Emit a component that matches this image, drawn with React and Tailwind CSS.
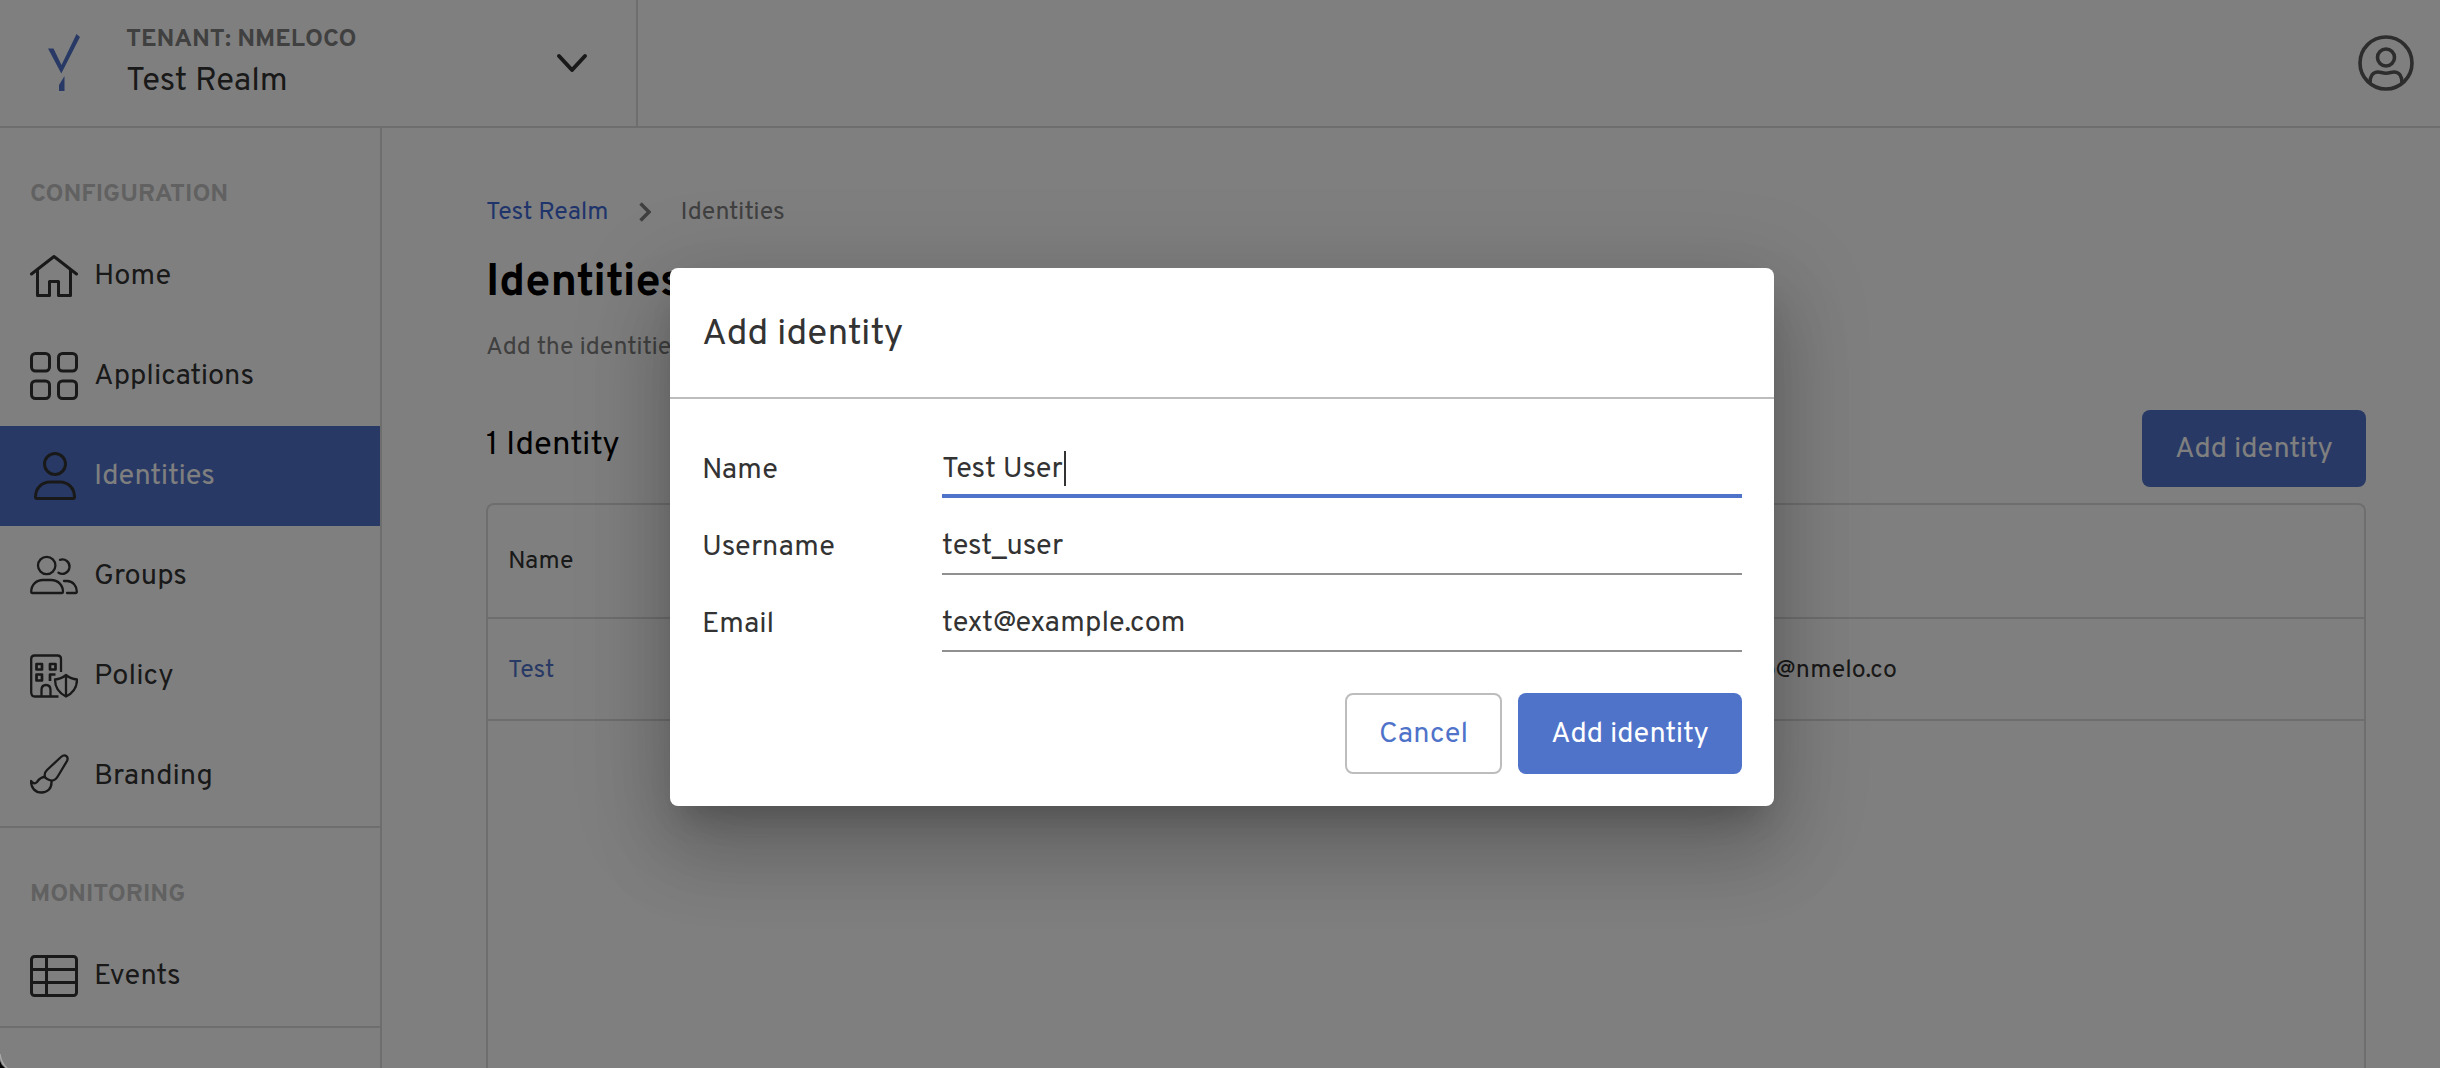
import { useEffect, useRef } from "react";

function Logo() {
  return (
    <svg viewBox="0 0 34 58" className="h-[58px] w-[34px] shrink-0" fill="#5073ca" aria-hidden="true">
      <path d="M0 14.500H5.500L13.500 31L28.500 0L32 3L13.300 39.500Z" />
      <path d="M16.500 42V57H11V51Z" />
    </svg>
  );
}

const icon = "h-12 w-12 shrink-0";

function HomeIcon() {
  return (
    <svg viewBox="0 0 48 48" className={icon} fill="none" stroke="#333" strokeWidth="3" strokeLinecap="round" strokeLinejoin="round" aria-hidden="true">
      <path d="M1.500 22L24 4.500L46.500 22M7.500 18V43.500H19.500V29.500H28.500V43.500H40.500V18" />
    </svg>
  );
}

function AppsIcon() {
  return (
    <svg viewBox="0 0 48 48" className={icon} fill="none" stroke="#333" strokeWidth="3" aria-hidden="true">
      <rect x="1.500" y="1.500" width="18" height="17.500" rx="4" />
      <rect x="28.500" y="1.500" width="18" height="17.500" rx="4" />
      <rect x="1.500" y="29" width="18" height="17.500" rx="4" />
      <rect x="28.500" y="29" width="18" height="17.500" rx="4" />
    </svg>
  );
}

function PersonIcon() {
  return (
    <svg viewBox="0 0 48 48" className={icon} fill="none" stroke="#333" strokeWidth="3" strokeLinejoin="round" aria-hidden="true">
      <circle cx="25" cy="12" r="10.500" />
      <path d="M5.500 45C5.500 36 12 30 20 30H30C38 30 44.500 36 44.500 45Q44.500 46.500 43 46.500H7Q5.500 46.500 5.500 45Z" />
    </svg>
  );
}

function GroupIcon() {
  return (
    <svg viewBox="0 0 48 48" className={icon} fill="none" stroke="#333" strokeWidth="2.300" strokeLinecap="round" strokeLinejoin="round" aria-hidden="true">
      <circle cx="16.700" cy="13.500" r="8.700" />
      <path d="M1.200 40C1.200 33 6 28 13 28H21C28 28 33 33 33 40Q33 41 32 41H2Q1.200 41 1.200 40Z" />
      <path d="M30 7.800A7.200 7.200 0 1 1 28.500 20.700M34 29H37C43 29 46.800 34 46.800 39.500Q46.800 41 45.500 41H37" />
    </svg>
  );
}

function PolicyIcon() {
  return (
    <svg viewBox="0 0 48 48" className={icon} fill="none" stroke="#333" strokeWidth="2.300" strokeLinejoin="round" aria-hidden="true">
      <path d="M31 20V7Q31 3.500 27.500 3.500H4.700Q1.200 3.500 1.200 7V40Q1.200 44.500 4.700 44.500H28.500" />
      <path d="M11.500 44V38Q11.500 33 16 33T20.500 38V44" />
      <g strokeWidth="2.700">
        <rect x="6.500" y="12" width="5.500" height="5.500" />
        <rect x="20" y="12" width="5.500" height="5.500" />
        <rect x="6.500" y="22.500" width="5.500" height="6" />
        <path d="M25.500 22.500H20V29" />
      </g>
      <path d="M36 23Q41 27 47 27.500Q47 39 36 44.500Q25 39 25 27.500Q31 27 36 23ZM36 23V44.500" />
    </svg>
  );
}

function BrushIcon() {
  return (
    <svg viewBox="0 0 48 48" className={icon} fill="none" stroke="#333" strokeWidth="2.300" strokeLinecap="round" strokeLinejoin="round" aria-hidden="true">
      <path d="M15 25C14 22 15 20 17 18L31 5C35 1.500 39 4.500 37 9L28 24C26 27.500 24 29 21 28.500Q16 27 15 25Z" />
      <path d="M21.500 29C22 37 17 40.500 11.500 40.500C5 40.500 1 36 1 29Q4 33 7 30C9 27 11 25 15 25" />
    </svg>
  );
}

function EventsIcon() {
  return (
    <svg viewBox="0 0 48 48" className={icon} fill="none" stroke="#333" strokeWidth="3" aria-hidden="true">
      <rect x="1.500" y="4.500" width="45" height="39" rx="3" />
      <path d="M1.500 17.500H46.500M1.500 30.500H46.500M16.500 4.500V43.500" />
    </svg>
  );
}

const sections = [
  {
    title: "CONFIGURATION",
    items: [
      { label: "Home", Icon: HomeIcon },
      { label: "Applications", Icon: AppsIcon },
      { label: "Identities", Icon: PersonIcon, active: true },
      { label: "Groups", Icon: GroupIcon },
      { label: "Policy", Icon: PolicyIcon },
      { label: "Branding", Icon: BrushIcon },
    ],
  },
  { title: "MONITORING", items: [{ label: "Events", Icon: EventsIcon }] },
];

function Header() {
  return (
    <header className="flex h-32 shrink-0 items-stretch border-b-2 border-[#dcdcdc]">
      <button type="button" className="flex w-[638px] items-center gap-11 border-r-2 border-[#dcdcdc] pr-12 pl-12 text-left">
        <Logo />
        <span className="flex flex-1 flex-col gap-1 pt-0.5">
          <span className="text-[25px] leading-8 font-bold text-[#808080]">TENANT: NMELOCO</span>
          <span className="text-[33px] leading-[44px] text-[#333]">Test Realm</span>
        </span>
        <svg viewBox="0 0 32 20" className="h-5 w-8" fill="none" stroke="#333" strokeWidth="4" strokeLinecap="round" strokeLinejoin="round" aria-hidden="true">
          <path d="M3 3L16 17L29 3" />
        </svg>
      </button>
      <button type="button" aria-label="Account" className="mr-[26px] ml-auto">
        <svg viewBox="0 0 56 56" className="h-14 w-14" fill="none" stroke="#5a5a5a" strokeWidth="3.600" aria-hidden="true">
          <circle cx="28" cy="28" r="26" />
          <circle cx="28" cy="22.500" r="8.500" />
          <path d="M12 48C12 41 15 37 20 37C23 37 24 38.200 28 38.200S33 37 36 37C41 37 44 41 44 48" />
        </svg>
      </button>
    </header>
  );
}

function Sidebar() {
  return (
    <nav className="w-[382px] shrink-0 border-r-2 border-[#dcdcdc]">
      {sections.map((section) => (
        <section key={section.title} className="border-b-2 border-[#dcdcdc]">
          <h2 className="flex h-[98px] items-center px-[30px] pt-9 text-[25px] leading-8 font-bold text-[#c2c2c2]">{section.title}</h2>
          {section.items.map(({ label, Icon, active }) => (
            <a
              key={label}
              href="#"
              aria-current={active ? "page" : undefined}
              className={active ? "flex h-[100px] items-center gap-4 bg-[#5073ca] px-[30px] text-[29px] text-white" : "flex h-[100px] items-center gap-4 px-[30px] text-[29px] text-[#333]"}
            >
              <Icon />
              <span className="pt-0.5">{label}</span>
            </a>
          ))}
        </section>
      ))}
    </nav>
  );
}

function Content() {
  return (
    <main className="flex min-w-0 flex-1 flex-col pt-16 pr-[74px] pl-[104px]">
      <nav aria-label="Breadcrumb" className="flex h-10 items-center gap-[30px] text-[25px] text-[#808080]">
        <a href="#" className="pt-1 text-[#4169d8]">Test Realm</a>
        <svg viewBox="0 0 12 20" className="h-5 w-3" fill="none" stroke="#808080" strokeWidth="3.500" aria-hidden="true">
          <path d="M1.500 1.500L10 10L1.500 18.500" />
        </svg>
        <span className="pt-1">Identities</span>
      </nav>
      <h1 className="mt-5 pt-1 text-[45px] leading-[56px] font-bold text-black">Identities</h1>
      <p className="mt-4 text-[25px] leading-10 text-[#808080]">Add the identities</p>
      <div className="mt-[42px] flex h-[77px] items-center justify-between">
        <h2 className="pb-1 text-[33px] text-black">1 Identity</h2>
        <button type="button" className="h-full w-56 rounded-lg bg-[#5073ca] pt-0.5 text-[29px] text-white">Add identity</button>
      </div>
      <div className="mt-4 flex-1 rounded-t-lg border-2 border-b-0 border-[#dcdcdc]">
        <table className="w-full table-fixed text-left text-[25px] text-[#333]">
          <thead>
            <tr className="h-[113px] border-b-2 border-[#dcdcdc]">
              <th scope="col" className="w-[64%] px-5 pt-1 font-normal">Name</th>
              <th scope="col" className="px-2 pt-1 font-normal">Email</th>
            </tr>
          </thead>
          <tbody>
            <tr className="h-[102px] border-b-2 border-[#dcdcdc]">
              <td className="px-5 pt-1.5"><a href="#" className="text-[#5073ca]">Test</a></td>
              <td className="px-8 pt-1.5">hello@nmelo.co</td>
            </tr>
          </tbody>
        </table>
      </div>
    </main>
  );
}

const fields = [
  { id: "name", label: "Name", value: "Test User" },
  { id: "username", label: "Username", value: "test_user" },
  { id: "email", label: "Email", value: "text@example.com" },
];

function Dialog() {
  const first = useRef(null);
  useEffect(() => {
    const input = first.current;
    input.focus();
    input.setSelectionRange(input.value.length, input.value.length);
  }, []);

  return (
    <div className="absolute inset-0 flex items-start justify-center bg-black/50 pt-[268px] pl-1">
      <div
        role="dialog"
        aria-modal="true"
        aria-labelledby="dialog-title"
        className="w-[1104px] rounded-lg bg-white text-[#333] shadow-[0_22px_30px_-14px_rgba(0,0,0,0.2),0_48px_76px_6px_rgba(0,0,0,0.14),0_18px_92px_16px_rgba(0,0,0,0.12)]"
      >
        <h2 id="dialog-title" className="flex h-[131px] items-center border-b-2 border-[#bdbdbd] px-8 pt-1 text-[37px]">Add identity</h2>
        <form className="px-8 pt-9 pb-8">
          {fields.map((field, index) => (
            <div key={field.id} className="flex h-[77px] items-start text-[29px]">
              <label htmlFor={field.id} className="w-60 leading-[71px]">{field.label}</label>
              <div className="relative flex min-w-0 flex-1">
                <input
                  id={field.id}
                  ref={index === 0 ? first : undefined}
                  defaultValue={field.value}
                  className="h-[63px] w-full border-b-2 border-[#909090] pt-2 caret-transparent outline-none focus:border-b-4 focus:border-[#5073ca] focus:pt-2.5"
                />
                {index === 0 && <span aria-hidden="true" className="absolute top-4 left-[122px] h-[35px] w-0.5 bg-[#333]" />}
              </div>
            </div>
          ))}
          <div className="mt-[27px] flex justify-end gap-4 text-[29px]">
            <button type="button" className="h-[81px] w-[157px] rounded-lg border-2 border-[#bdbdbd] pt-0.5 text-[#5073ca]">Cancel</button>
            <button type="submit" className="h-[81px] w-56 rounded-lg bg-[#5073ca] pt-0.5 text-white">Add identity</button>
          </div>
        </form>
      </div>
    </div>
  );
}

function WindowCorner() {
  return (
    <svg viewBox="0 0 10 16" className="absolute bottom-0 left-0 h-4 w-2.5" fill="none" aria-hidden="true">
      <path d="M0 2Q1 11 7 16" stroke="#a8a8a8" strokeWidth="1.500" />
      <path d="M0 9Q1 13 5 16H0Z" fill="#000" />
    </svg>
  );
}

export default function App() {
  return (
    <div className="relative flex h-screen flex-col overflow-hidden bg-white font-[Overpass,Inter,sans-serif]">
      <Header />
      <div className="flex min-h-0 flex-1">
        <Sidebar />
        <Content />
      </div>
      <Dialog />
      <WindowCorner />
    </div>
  );
}
